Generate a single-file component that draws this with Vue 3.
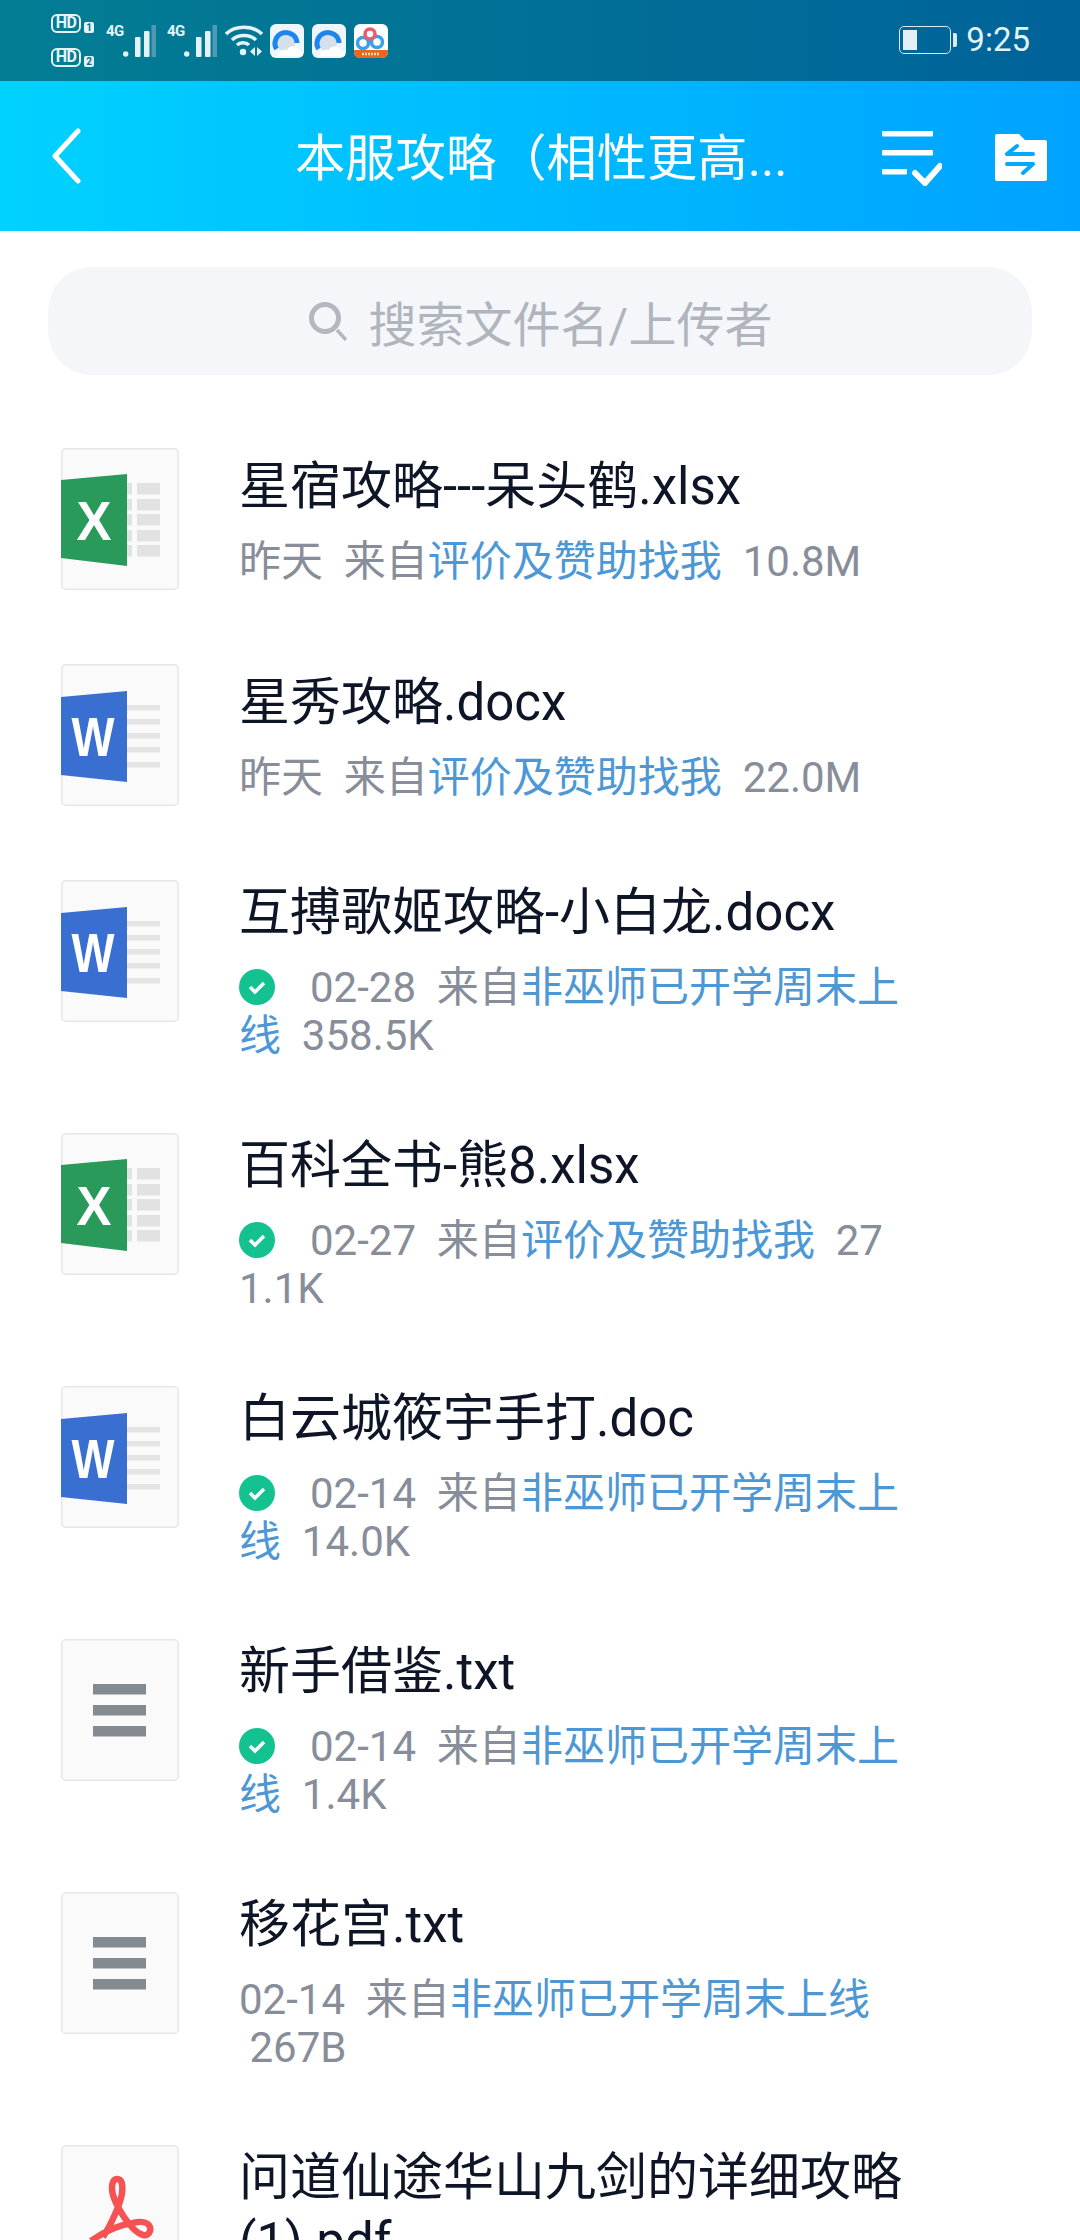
<script setup>
const files = [
  { type: 'xls', name: '星宿攻略---呆头鹤.xlsx', date: '昨天', from: '评价及赞助找我', size: '10.8M' },
  { type: 'doc', name: '星秀攻略.docx', date: '昨天', from: '评价及赞助找我', size: '22.0M' },
  { type: 'doc', name: '互搏歌姬攻略-小白龙.docx', date: '02-28', from: '非巫师已开学周末上线', size: '358.5K', saved: true },
  { type: 'xls', name: '百科全书-熊8.xlsx', date: '02-27', from: '评价及赞助找我', size: '271.1K', saved: true },
  { type: 'doc', name: '白云城筱宇手打.doc', date: '02-14', from: '非巫师已开学周末上线', size: '14.0K', saved: true },
  { type: 'txt', name: '新手借鉴.txt', date: '02-14', from: '非巫师已开学周末上线', size: '1.4K', saved: true },
  { type: 'txt', name: '移花宫.txt', date: '02-14', from: '非巫师已开学周末上线', size: '267B' },
  { type: 'pdf', name: '问道仙途华山九剑的详细攻略(1).pdf', date: '02-14', from: '非巫师已开学周末上线', size: '1.2M' }
]
const xlsCells = [35, 51, 66, 82, 97]
const docLines = [41, 55, 69, 83, 98]
</script>

<template>
  <div class="page">
    <div class="status">
      <div class="sims">
        <div class="sim"><span class="hd">HD</span><span class="num">1</span></div>
        <div class="sim"><span class="hd">HD</span><span class="num">2</span></div>
      </div>
      <div v-for="n in 2" :key="n" class="net">
        <span class="g4">4G</span>
        <svg width="33" height="32" viewBox="0 0 33 32">
          <circle cx="2.7" cy="29" r="2.7" fill="#e4f3f7" />
          <rect x="12" y="12" width="5.5" height="20" rx="1" fill="#e4f3f7" />
          <rect x="21" y="6" width="5.5" height="26" rx="1" fill="#e4f3f7" />
          <rect x="28.5" y="0" width="4.5" height="32" fill="#4f9ab3" />
        </svg>
      </div>
      <svg class="wifi" width="38" height="32" viewBox="0 0 38 32" fill="none" stroke="#e4f3f7" stroke-width="3.5">
        <path d="M1 9C10 0 28 0 37 9" />
        <path d="M7 15C13 9 25 9 31 15" />
        <path d="M12 20C15 17 21 17 24 20" />
        <circle cx="18" cy="27" r="3.2" fill="#e4f3f7" stroke="none" />
        <path d="M30 22l-5 4.5 5 4.5zM32 22l5 4.5-5 4.5z" fill="#e4f3f7" stroke="none" />
      </svg>
      <svg v-for="n in 2" :key="n" class="app" width="34" height="34" viewBox="0 0 34 34">
        <rect width="34" height="34" rx="6" fill="#eef6fc" />
        <circle cx="16" cy="19" r="9" fill="#d6e0ea" />
        <path d="M6.5 25A11 11 0 1 1 27 19" fill="none" stroke="#1c85ee" stroke-width="5" />
        <path d="M8 32c0-5 5-7 9-6 2-5 10-5 11 0 3 0 5 2 5 6z" fill="#fff" />
      </svg>
      <svg class="app" width="34" height="34" viewBox="0 0 34 34">
        <rect width="34" height="34" rx="6" fill="#fff" />
        <path d="M2 26h30l2 0v2a6 6 0 0 1-6 6H6a6 6 0 0 1-6-6v-2z" fill="#e8671c" />
        <path d="M8 30h18" stroke="#f7d9a8" stroke-width="2.5" stroke-dasharray="2 1" />
        <circle cx="9" cy="19" r="5.5" fill="none" stroke="#3aa0e8" stroke-width="3.5" />
        <circle cx="23" cy="18" r="5.5" fill="none" stroke="#3aa0e8" stroke-width="3.5" />
        <circle cx="16" cy="10" r="5" fill="none" stroke="#ea5a70" stroke-width="3.5" />
      </svg>
      <div class="status-right">
        <div class="battery"><i class="level"></i></div>
        <i class="nub"></i>
        <span class="time">9:25</span>
      </div>
    </div>

    <header class="bar">
      <svg class="back" width="30" height="56" viewBox="0 0 30 56" fill="none" stroke="#fff" stroke-width="5" stroke-linecap="round" stroke-linejoin="round">
        <path d="M27 3L4 28l23 25" />
      </svg>
      <div class="heading">本服攻略（相性更高...</div>
      <svg class="act-list" width="60" height="56" viewBox="0 0 60 56" fill="#fff">
        <rect x="0" y="1" width="51" height="5.5" rx="1" />
        <rect x="0" y="20" width="51" height="5.5" rx="1" />
        <rect x="0" y="39" width="25" height="5.5" rx="1" />
        <path d="M33 43l10 10 15-17" fill="none" stroke="#fff" stroke-width="6" stroke-linecap="round" />
      </svg>
      <svg class="act-folder" width="52" height="47" viewBox="0 0 52 47">
        <path d="M0 2a2 2 0 0 1 2-2h22l6 6h20a2 2 0 0 1 2 2v37a2 2 0 0 1-2 2H2a2 2 0 0 1-2-2z" fill="#fff" />
        <path d="M12 20h26M12 20l10-8M38 30H12M38 30l-10 9" fill="none" stroke="#05a8ff" stroke-width="4" stroke-linecap="round" />
      </svg>
    </header>

    <div class="search">
      <svg width="40" height="40" viewBox="0 0 40 40" fill="none" stroke="#b3b7bf">
        <circle cx="17" cy="17" r="13.5" stroke-width="5" />
        <path d="M29 29l9 10" stroke-width="3.5" />
      </svg>
      <span>搜索文件名/上传者</span>
    </div>

    <div class="list">
      <div v-for="f in files" :key="f.name" class="row">
        <svg class="thumb" width="118" height="142" viewBox="0 0 118 142">
          <rect x="0.75" y="0.75" width="116.5" height="140.5" rx="4" fill="#fafafa" stroke="#e6e6e6" stroke-width="1.5" />
          <template v-if="f.type === 'xls'">
            <g fill="#e2e2e2">
              <template v-for="y in xlsCells" :key="y">
                <rect x="66" :y="y" width="5" height="11.5" />
                <rect x="76" :y="y" width="23" height="11.5" />
              </template>
            </g>
            <polygon points="0,32 66,26 66,118 0,110" fill="#2a9a5b" />
            <text x="33" y="92" class="mark" textLength="35" lengthAdjust="spacingAndGlyphs">X</text>
          </template>
          <template v-else-if="f.type === 'doc'">
            <g fill="#e4e4e4">
              <rect v-for="y in docLines" :key="y" x="66" :y="y" width="33" height="5.5" />
            </g>
            <polygon points="0,33 66,27 66,118 0,111" fill="#3a6fd2" />
            <text x="32" y="92" class="mark" textLength="43" lengthAdjust="spacingAndGlyphs">W</text>
          </template>
          <template v-else-if="f.type === 'txt'">
            <g fill="#838b91">
              <rect x="32" y="45" width="53" height="10.5" />
              <rect x="32" y="66" width="53" height="10.5" />
              <rect x="32" y="87" width="53" height="10.5" />
            </g>
          </template>
          <template v-else>
            <path d="M56 34C51 34 50 42 52 50C55 60 59 66 63 72C67 78 74 88 82 90C88 91 90 86 89 82C87 77 80 76 72 78C58 80 44 86 30 96M56 34C61 34 62 40 61 48C60 58 54 70 48 82L42 92" fill="none" stroke="#f55353" stroke-width="6.5" />
          </template>
        </svg>
        <div class="body">
          <div class="name">{{ f.name }}</div>
          <div class="meta"><svg v-if="f.saved" class="ok" width="36" height="36" viewBox="0 0 36 36"><circle cx="18" cy="18" r="18" fill="#14c191" /><path d="M11 18l5 5 9-9" fill="none" stroke="#fff" stroke-width="3.5" /></svg>{{ f.date + '\u0020\u0020来自' }}<span class="from">{{ f.from }}</span>{{ '\u0020\u00a0' + f.size }}</div>
        </div>
      </div>
    </div>
  </div>
</template>

<style>
html, body {
  margin: 0;
  background: #fff;
}
</style>

<style scoped>
.page {
  width: 1080px;
  height: 2240px;
  overflow: hidden;
  background: #fff;
  font-family: Roboto, "Noto Sans CJK SC", sans-serif;
}

/* status bar */
.status {
  height: 81px;
  display: flex;
  align-items: center;
  padding-left: 51px;
  padding-right: 50px;
  box-sizing: border-box;
  background: linear-gradient(90deg, #027d93, #00639a);
  color: #e4f3f7;
}
.sims {
  display: flex;
  flex-direction: column;
  gap: 15px;
  width: 55px;
}
.sim {
  display: flex;
  align-items: flex-end;
  gap: 3px;
}
.hd {
  width: 30px;
  height: 19px;
  box-sizing: border-box;
  border: 2.5px solid #e4f3f7;
  border-radius: 6px;
  font: 700 16px/14px Roboto, sans-serif;
  text-align: center;
  letter-spacing: -0.5px;
}
.num {
  width: 10px;
  height: 11px;
  border-radius: 2px;
  background: #e4f3f7;
  color: #04708f;
  font: 700 10px/11px Roboto, sans-serif;
  text-align: center;
}
.net {
  display: flex;
  align-items: flex-end;
  margin-right: 11px;
  height: 33px;
}
.g4 {
  font: 700 15px/15px "Roboto", sans-serif;
  width: 17px;
  align-self: flex-start;
  letter-spacing: -0.5px;
}
.wifi {
  margin-right: 7px;
  margin-left: -3px;
}
.app {
  margin-right: 8px;
}
.status-right {
  margin-left: auto;
  display: flex;
  align-items: center;
}
.battery {
  width: 52px;
  height: 28px;
  box-sizing: border-box;
  border: 1.5px solid #d8eaf2;
  border-radius: 5px;
  padding: 3px;
  margin-bottom: 2px;
}
.level {
  display: block;
  width: 14px;
  height: 100%;
  background: #e4f0f6;
}
.nub {
  width: 4px;
  height: 14px;
  margin-left: 2px;
  margin-bottom: 2px;
  border-radius: 0 2px 2px 0;
  background: #d8eaf2;
}
.time {
  margin-left: 9px;
  font-size: 33px;
  line-height: 40px;
  margin-bottom: 2px;
}

/* title bar */
.bar {
  height: 150px;
  display: flex;
  align-items: center;
  padding-left: 51px;
  background: linear-gradient(90deg, #00d2ff, #00a2ff);
  color: #fff;
}
.heading {
  width: 540px;
  margin-left: 214px;
  font-size: 50.3px;
  line-height: 60px;
  margin-top: 6px;
  white-space: nowrap;
  overflow: hidden;
  text-spacing-trim: space-all;
}
.act-list {
  margin-left: 47px;
  margin-top: 4px;
}
.act-folder {
  margin-left: 53px;
  margin-top: 3px;
}

/* search */
.search {
  height: 108px;
  margin: 36px 48px 0;
  border-radius: 44px;
  background: #f4f6fa;
  display: flex;
  align-items: center;
  justify-content: center;
  gap: 21px;
  color: #b0b4bd;
  font-size: 48px;
}

/* file rows */
.list {
  margin-top: 36px;
}
.row {
  display: flex;
  align-items: flex-start;
  padding: 37px 0 37px 61px;
}
.thumb {
  flex: none;
}
.body {
  width: 664px;
  margin: 1px 0 -1px 60px;
  min-height: 142px;
  display: flex;
  flex-direction: column;
  justify-content: center;
}
.name {
  font-size: 51px;
  line-height: 64px;
  color: #0d1526;
  word-break: break-all;
}
.meta {
  margin-top: 19px;
  font-size: 42px;
  line-height: 48px;
  color: #878d99;
  white-space: pre-wrap;
  word-break: break-all;
}
.from {
  color: #4d98d4;
}
.ok {
  vertical-align: -3px;
  margin-right: 35px;
}
.mark {
  font: 700 56px "Liberation Sans", sans-serif;
  fill: #fff;
  text-anchor: middle;
}
</style>
